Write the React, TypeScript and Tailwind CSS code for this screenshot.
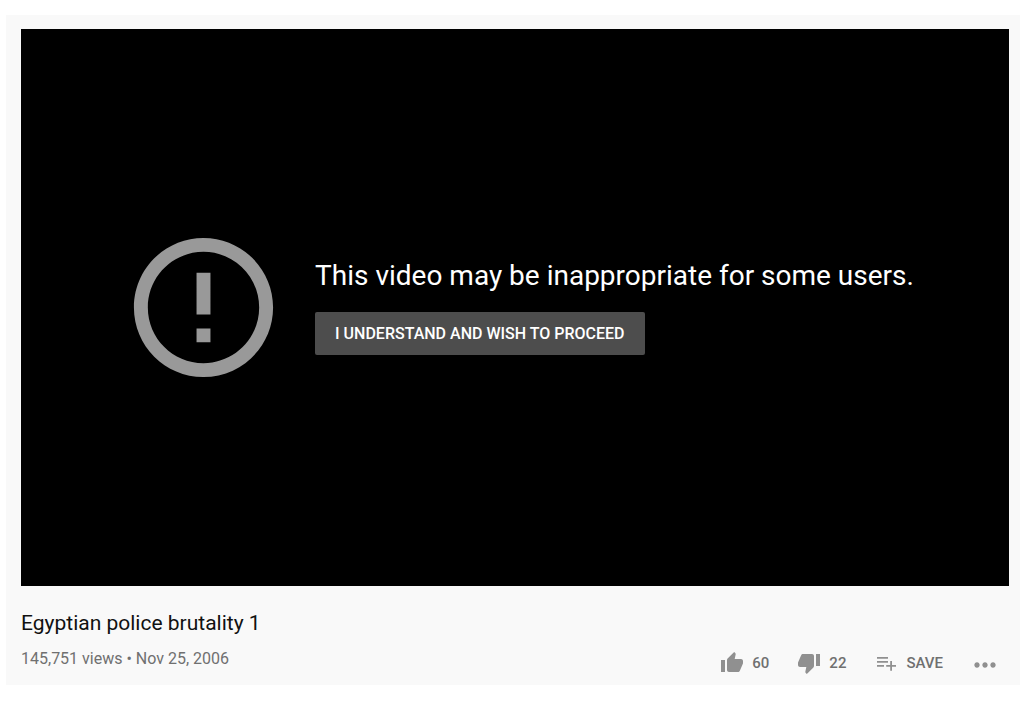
import type { ReactNode } from 'react';

const icons = {
  like: 'M1 21h4V9H1v12zm22-11c0-1.1-.9-2-2-2h-6.31l.95-4.57.03-.32c0-.41-.17-.79-.44-1.06L14.17 1 7.59 7.59C7.22 7.95 7 8.45 7 9v10c0 1.1.9 2 2 2h9c.83 0 1.54-.5 1.84-1.22l3.02-7.05c.09-.23.14-.47.14-.73v-2z',
  dislike: 'M15 3H6c-.83 0-1.54.5-1.84 1.22l-3.02 7.05c-.09.23-.14.47-.14.73v2c0 1.1.9 2 2 2h6.31l-.95 4.57-.03.32c0 .41.17.79.44 1.06L9.83 23l6.59-6.59c.36-.36.58-.86.58-1.41V5c0-1.1-.9-2-2-2zm4 0v12h4V3h-4z',
  save: 'M14 10H3v1.7h11V10zm0-4H3v1.7h11V6zm4 8v-4h-1.8v4h-4v1.8h4v4H18v-4h4V14h-4zM3 15.7h7V14H3v1.7z',
  more: 'M6 11.5c-1.1 0-2 .9-2 2s.9 2 2 2 2-.9 2-2-.9-2-2-2zm12 0c-1.1 0-2 .9-2 2s.9 2 2 2 2-.9 2-2-.9-2-2-2zm-6 0c-1.1 0-2 .9-2 2s.9 2 2 2 2-.9 2-2-.9-2-2-2z',
  error: 'M11 15h2v2h-2zm0-8h2v6h-2zm.99-5C6.47 2 2 6.48 2 12s4.47 10 9.99 10C17.52 22 22 17.52 22 12S17.52 2 11.99 2zM12 20c-4.42 0-8-3.58-8-8s3.58-8 8-8 8 3.58 8 8-3.58 8-8 8z',
};

function Icon({ name, className }: { name: keyof typeof icons; className: string }) {
  return (
    <svg viewBox="0 0 24 24" fill="currentColor" aria-hidden="true" className={`shrink-0 ${className}`}>
      <path d={icons[name]} />
    </svg>
  );
}

function Action({ icon, label, children }: { icon: keyof typeof icons; label: string; children: ReactNode }) {
  return (
    <button type="button" aria-label={label} className="flex items-center gap-2 text-[15px] leading-6 font-medium">
      <Icon name={icon} className="size-6 text-[#909090]" />
      {children}
    </button>
  );
}

export default function App() {
  return (
    <div className="min-h-screen bg-white px-1.5 py-[15px] font-['Roboto','Liberation_Sans',sans-serif]">
      <main className="bg-[#f9f9f9] pt-3.5 pr-[11px] pb-1.5 pl-[15px]">
        {/* Player, covered by the content warning */}
        <section className="flex aspect-[988/557] w-full items-center justify-center gap-7 bg-black pl-1 text-white">
          <Icon name="error" className="size-[167px] text-[#999]" />
          <div>
            <h2 className="text-[28px] leading-8">This video may be inappropriate for some users.</h2>
            <button
              type="button"
              className="mt-5 rounded-xs bg-[#4d4d4d] px-5 py-2.5 text-base leading-[23px] font-medium uppercase"
            >
              I understand and wish to proceed
            </button>
          </div>
        </section>

        {/* Title and meta */}
        <h1 className="mt-6 text-[21px] leading-[26px] text-[#111]">Egyptian police brutality 1</h1>
        <div className="mt-[7px] flex items-start justify-between text-[#707070]">
          <p className="pt-1 text-base leading-6">145,751 views • Nov 25, 2006</p>
          <div className="flex items-center gap-7 pt-1 pr-2">
            <Action icon="like" label="Like, 60">60</Action>
            <Action icon="dislike" label="Dislike, 22">22</Action>
            <Action icon="save" label="Save">SAVE</Action>
            <button type="button" aria-label="More actions" className="-ml-0.5">
              <Icon name="more" className="size-8 text-[#909090]" />
            </button>
          </div>
        </div>
      </main>
    </div>
  );
}
